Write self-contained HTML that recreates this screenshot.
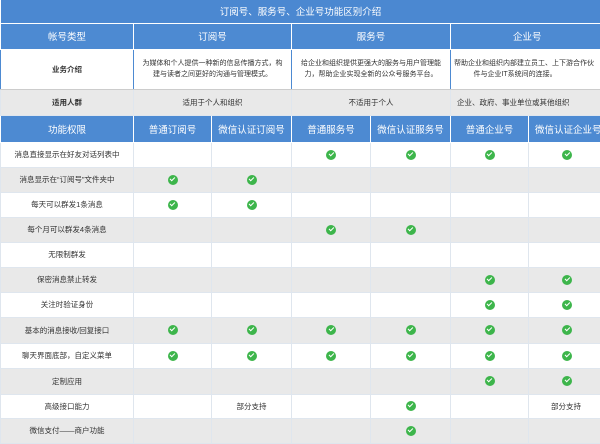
<!DOCTYPE html><html><head><meta charset="utf-8"><style>
*{margin:0;padding:0;box-sizing:border-box}
body{width:600px;height:440px;overflow:hidden;background:#fff;font-family:"Liberation Sans","Noto Sans CJK SC",sans-serif;}
table{border-collapse:collapse;table-layout:fixed;width:624px;}
td{text-align:center;vertical-align:middle;font-size:7.5px;color:#333;border:1px solid #dfe6ee;overflow:hidden;white-space:nowrap}
.t td{background:#4b88d1;color:#fff;font-size:9.5px;height:23px;border:none}
.h td{background:#4d8ad2;color:#fff;font-size:9.5px;border:1px solid #fff;}
.b{font-weight:bold}
.g td{background:#e9e9e9}
.i td{font-size:7px;line-height:11px;white-space:normal;border-color:#4d8ad2 #4d8ad2 #ccc}
.c{display:inline-block;width:10px;height:10px;border-radius:50%;background:#3db54b;position:relative;vertical-align:middle}
.c:after{content:"";position:absolute;left:2.6px;top:2.2px;width:4px;height:2.2px;border-left:1.6px solid #fff;border-bottom:1.6px solid #fff;transform:rotate(-45deg)}
</style></head><body>
<table>
<colgroup><col style="width:133px"><col style="width:78px"><col style="width:80px"><col style="width:79px"><col style="width:80px"><col style="width:78px"><col style="width:96px"></colgroup>
<tr class="t"><td colspan="7" style="padding-right:24px">订阅号、服务号、企业号功能区别介绍</td></tr>
<tr class="h" style="height:26px"><td>帐号类型</td><td colspan="2">订阅号</td><td colspan="2">服务号</td><td colspan="2" style="text-align:left;padding-left:62px">企业号</td></tr>
<tr class="i" style="height:40px"><td class="b" style="font-size:7.5px">业务介绍</td><td colspan="2">为媒体和个人提供一种新的信息传播方式，构<br>建与读者之间更好的沟通与管理模式。</td><td colspan="2">给企业和组织提供更强大的服务与用户管理能<br>力，帮助企业实现全新的公众号服务平台。</td><td colspan="2" style="text-align:left;padding-left:3px">帮助企业和组织内部建立员工、上下游合作伙<br>&nbsp;&nbsp;&nbsp;&nbsp;&nbsp;&nbsp;&nbsp;&nbsp;&nbsp;&nbsp;件与企业IT系统间的连接。</td></tr>
<tr class="g" style="height:26px"><td class="b">适用人群</td><td colspan="2">适用于个人和组织</td><td colspan="2">不适用于个人</td><td colspan="2" style="text-align:left;padding-left:6px">企业、政府、事业单位或其他组织</td></tr>
<tr class="h" style="height:27px"><td>功能权限</td><td>普通订阅号</td><td>微信认证订阅号</td><td>普通服务号</td><td>微信认证服务号</td><td>普通企业号</td><td style="text-align:left;padding-left:6px">微信认证企业号</td></tr>
<tr style="height:25px"><td>消息直接显示在好友对话列表中</td><td></td><td></td><td><i class="c"></i></td><td><i class="c"></i></td><td><i class="c"></i></td><td style="text-align:left;padding-left:33px"><i class="c"></i></td></tr>
<tr class="g" style="height:25px"><td>消息显示在“订阅号”文件夹中</td><td><i class="c"></i></td><td><i class="c"></i></td><td></td><td></td><td></td><td></td></tr>
<tr style="height:25px"><td>每天可以群发1条消息</td><td><i class="c"></i></td><td><i class="c"></i></td><td></td><td></td><td></td><td></td></tr>
<tr class="g" style="height:25px"><td>每个月可以群发4条消息</td><td></td><td></td><td><i class="c"></i></td><td><i class="c"></i></td><td></td><td></td></tr>
<tr style="height:25px"><td>无限制群发</td><td></td><td></td><td></td><td></td><td></td><td></td></tr>
<tr class="g" style="height:25px"><td>保密消息禁止转发</td><td></td><td></td><td></td><td></td><td><i class="c"></i></td><td style="text-align:left;padding-left:33px"><i class="c"></i></td></tr>
<tr style="height:25px"><td>关注时验证身份</td><td></td><td></td><td></td><td></td><td><i class="c"></i></td><td style="text-align:left;padding-left:33px"><i class="c"></i></td></tr>
<tr class="g" style="height:26px"><td>基本的消息接收/回复接口</td><td><i class="c"></i></td><td><i class="c"></i></td><td><i class="c"></i></td><td><i class="c"></i></td><td><i class="c"></i></td><td style="text-align:left;padding-left:33px"><i class="c"></i></td></tr>
<tr style="height:25px"><td>聊天界面底部，自定义菜单</td><td><i class="c"></i></td><td><i class="c"></i></td><td><i class="c"></i></td><td><i class="c"></i></td><td><i class="c"></i></td><td style="text-align:left;padding-left:33px"><i class="c"></i></td></tr>
<tr class="g" style="height:26px"><td>定制应用</td><td></td><td></td><td></td><td></td><td><i class="c"></i></td><td style="text-align:left;padding-left:33px"><i class="c"></i></td></tr>
<tr style="height:24px"><td>高级接口能力</td><td></td><td>部分支持</td><td></td><td><i class="c"></i></td><td></td><td style="text-align:left;padding-left:22px">部分支持</td></tr>
<tr class="g" style="height:25px"><td>微信支付——商户功能</td><td></td><td></td><td></td><td><i class="c"></i></td><td></td><td></td></tr>
</table>
</body></html>
